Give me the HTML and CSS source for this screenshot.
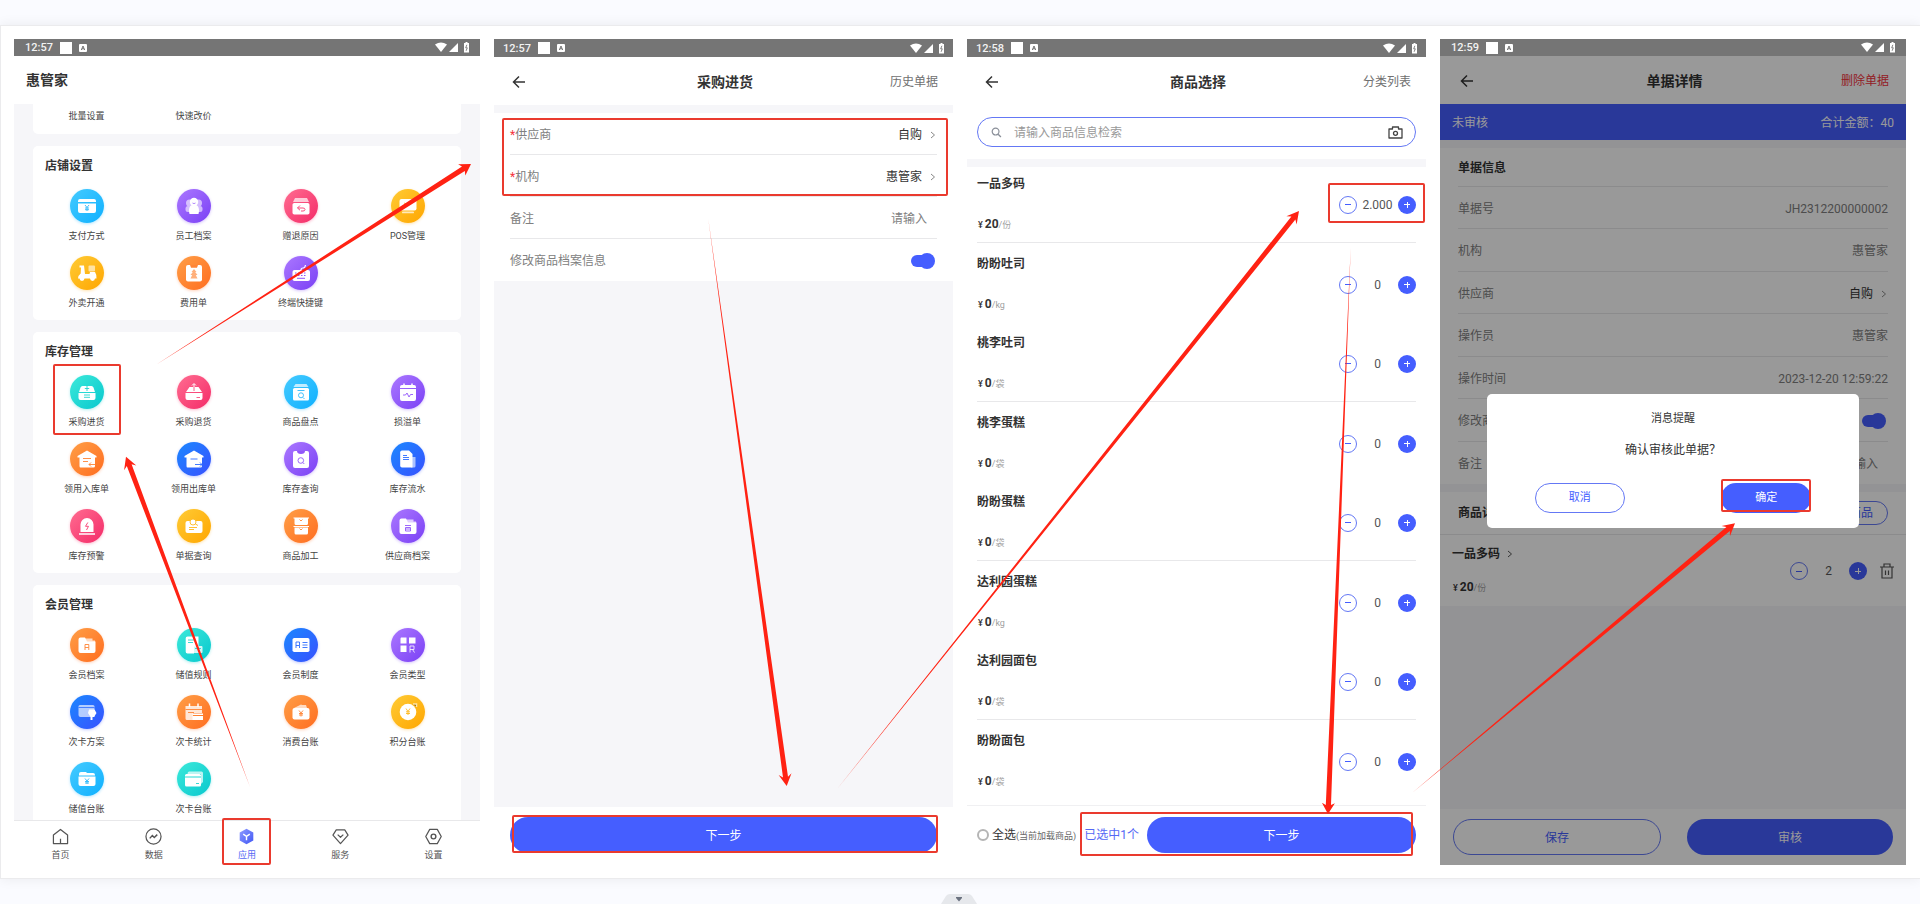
FILE: index.html
```html
<!DOCTYPE html>
<html lang="zh-CN">
<head>
<meta charset="utf-8">
<title>采购进货流程</title>
<link rel="stylesheet" href="styles.css">
</head>
<body>
<svg class="sprite" aria-hidden="true">
  <defs>
    <linearGradient id="g-tab" x1="0" y1="0" x2="1" y2="1"><stop offset="0" stop-color="#8f9bff"/><stop offset="1" stop-color="#4057f5"/></linearGradient>
    <symbol id="status-right" viewBox="0 0 36 11">
      <path fill="#fff" d="M0 2.600Q6-1.600 12 2.600L6 10z"/>
      <path fill="#fff" d="M23 1v9h-9z"/>
      <path fill="#fff" d="M30.500 0h2v1H34v9.500h-5V1h1.500z"/>
      <path fill="none" stroke="#757575" stroke-width=".9" d="M31.900 2.800l-1.200 3h1.600l-1.200 3"/>
    </symbol>
    <symbol id="status-app" viewBox="0 0 8 8"><rect width="8" height="8" rx="1" fill="#fff"/><path d="M2.300 6l1.700-4 1.700 4M3 4.800h2" fill="none" stroke="#666" stroke-width=".9"/></symbol>
    <symbol id="back" viewBox="0 0 14 14"><path d="M13 7H2M7 1.500L1.500 7 7 12.500" fill="none" stroke="currentColor" stroke-width="1.500"/></symbol>
    <symbol id="chevron" viewBox="0 0 6 8"><path d="M1 1l3.500 3L1 7" fill="none" stroke="currentColor"/></symbol>
    <symbol id="search" viewBox="0 0 12 12"><circle cx="5" cy="5" r="3.700" fill="none" stroke="currentColor" stroke-width="1.300"/><path d="M7.800 7.800l3 3" stroke="currentColor" stroke-width="1.500"/></symbol>
    <symbol id="camera" viewBox="0 0 15 13"><path d="M1 3h3.500V1h6v2H14v9H1z" fill="none" stroke="currentColor" stroke-width="1.300" stroke-linejoin="round"/><circle cx="7.500" cy="7.300" r="2" fill="none" stroke="currentColor" stroke-width="1.300"/></symbol>
    <symbol id="trash" viewBox="0 0 14 16"><path d="M0 4h14M4 4V1h6v3M2 4v11h10V4M5.500 7.500v4.500M8.500 7.500v4.500" fill="none" stroke="currentColor" stroke-width="1.200"/></symbol>

    <symbol id="pay" viewBox="0 0 34 34"><path fill="#fff" d="M10 10h14q2 0 2 2v1H8v-1q0-2 2-2zM8 14.500h18V22q0 2-2 2H10q-2 0-2-2z"/><path fill="none" stroke="currentColor" stroke-width=".9" d="M15 16l2 2.500 2-2.500M17 18.500V22M15 19h4M15 20.700h4"/></symbol>
    <symbol id="staff" viewBox="0 0 34 34"><g fill="#fff"><g opacity=".6"><circle cx="12.500" cy="14" r="3.500"/><circle cx="21.500" cy="14" r="3.500"/><rect x="8.500" y="17" width="17" height="6" rx="2.500"/></g><circle cx="17" cy="13" r="4.200"/><path d="M15 16h4c3 1 3.500 5 2.500 9h-9c-1-4-.5-8 2.500-9z"/></g><path d="M15.500 14q1.500 1.300 3 0" fill="none" stroke="currentColor" stroke-width=".7"/></symbol>
    <symbol id="reason" viewBox="0 0 34 34"><path fill="#fff" opacity=".7" d="M11 9h12l2 4H9z"/><rect x="8.500" y="14" width="17" height="11.500" rx="1.800" fill="#fff"/><path fill="none" stroke="currentColor" d="M16 16.500L13.500 19l2.500 2.200M13.500 19H19q2 0 2 1.500T19 22h-2"/></symbol>
    <symbol id="pos" viewBox="0 0 34 34"><rect x="8.500" y="10" width="17" height="11.500" rx="2" fill="#fff"/><rect x="11" y="22.500" width="12" height="1.800" rx=".9" fill="#fff" opacity=".7"/><path fill="none" stroke="currentColor" stroke-width=".8" d="M13 14l4 2 4-2"/></symbol>
    <symbol id="scooter" viewBox="0 0 34 34"><rect x="18.500" y="9.500" width="6.500" height="6" rx="1" fill="#fff" opacity=".6"/><path fill="#fff" d="M9.500 9.500H14l1 8.500h4.500l.5-2H25q1.500 2 1.500 6.500H8q0-3 2.700-5l.3-6H9.500z"/><circle cx="12" cy="22.500" r="2.400" fill="#fff"/><circle cx="22.500" cy="22.500" r="2.400" fill="#fff"/></symbol>
    <symbol id="expense" viewBox="0 0 34 34"><rect x="9" y="9" width="16" height="16.500" rx="2" fill="#fff"/><path fill="currentColor" d="M13 9h8l-1 2.800h-6z"/><path fill="currentColor" opacity=".65" d="M17 13l2.500 3h-1.300l2.300 3h-1.700l1.700 3.500h-7l1.700-3.500h-1.700l2.300-3h-1.300z"/></symbol>
    <symbol id="keyboard" viewBox="0 0 34 34"><rect x="8.500" y="14" width="17.500" height="11" rx="2" fill="#fff"/><path d="M17 14q0-2 2-2t2.500-3" fill="none" stroke="#fff" stroke-width="1.200"/><path d="M11 17h12M11 19.500h12" stroke="currentColor" stroke-dasharray="1.500 1.500"/><path d="M13 22.300h8" stroke="currentColor"/></symbol>
    <symbol id="buy" viewBox="0 0 34 34"><path fill="#fff" d="M12.500 11h9q1.500 0 2 1.500l1.500 4.500H9l1.500-4.500q.5-1.500 2-1.500zM8.500 18h17v5q0 2-2 2h-13q-2 0-2-2z"/><path stroke="currentColor" stroke-width=".9" d="M17 10v6M14.800 13.500h4.400M14 20h6M14 22.300h6"/></symbol>
    <symbol id="buyback" viewBox="0 0 34 34"><path fill="#fff" d="M12.500 12h9l3.500 5H9zM8.500 18h17v5q0 2-2 2h-13q-2 0-2-2z"/><path fill="none" stroke="#fff" d="M17 12V9M15 10.500L17 8.500l2 2"/><path fill="none" stroke="currentColor" stroke-width=".9" d="M17 12v4M19.500 22.500H23"/></symbol>
    <symbol id="count" viewBox="0 0 34 34"><path fill="#fff" opacity=".7" d="M11.500 9h11l2 3h-15z"/><rect x="9" y="13" width="16" height="12.500" rx="1.500" fill="#fff"/><path fill="none" stroke="currentColor" stroke-width=".9" d="M13.500 15.500h7M19 22.500l1.500 1.500"/><circle cx="17" cy="20.300" r="2.500" fill="none" stroke="currentColor" stroke-width=".9"/></symbol>
    <symbol id="pulse" viewBox="0 0 34 34"><path fill="#fff" d="M11 10h12q2 0 2 2v1H9v-1q0-2 2-2zM9 14h16v10q0 2-2 2H11q-2 0-2-2z"/><path stroke="#fff" stroke-width="1.500" d="M13 8.500V11M21 8.500V11"/><path fill="none" stroke="currentColor" stroke-width=".9" d="M12 20h2.500l1.500-2 2 4 1.500-2.500H22"/></symbol>
    <symbol id="house-in" viewBox="0 0 34 34"><path fill="#fff" d="M17 8.500l9.500 5.500v1.500H25V24q0 1.500-1.500 1.500h-13Q9.500 25.500 9.500 24v-8.500h-2V14z"/><path fill="none" stroke="currentColor" stroke-width=".9" d="M13 16.500h8M13 19.500h5M25 22.500h-6M21 20.500l-2 2 2 2"/></symbol>
    <symbol id="house-out" viewBox="0 0 34 34"><path fill="#fff" d="M17 8.500l9.500 5.500v1.500H25V24q0 1.500-1.500 1.500h-13Q9.500 25.500 9.500 24v-8.500h-2V14z"/><path fill="none" stroke="currentColor" stroke-width=".9" d="M13.500 17h7M18 22.500h7M23 20.500l2 2-2 2"/></symbol>
    <symbol id="query" viewBox="0 0 34 34"><rect x="9" y="9" width="16" height="17" rx="2" fill="#fff"/><path fill="currentColor" d="M13 9h8q0 3-4 3t-4-3z"/><circle cx="16.800" cy="18.500" r="2.800" fill="none" stroke="currentColor" stroke-width=".9"/><path stroke="currentColor" stroke-width=".9" d="M18.800 20.500l1.500 1.500"/></symbol>
    <symbol id="flow" viewBox="0 0 34 34"><path fill="#fff" opacity=".6" d="M21 15h3.500v9q0 1.500-1.500 1.500h-3z"/><path fill="#fff" d="M11 8.500h7l3.500 3.500v13.500H11q-1.800 0-1.800-1.800V10.300q0-1.800 1.800-1.800z"/><path stroke="currentColor" stroke-width=".9" d="M12 13.500h4M12 15.500h6M12 17.500h6"/></symbol>
    <symbol id="alert" viewBox="0 0 34 34"><path fill="#fff" d="M10.500 23v-7.500a6.500 6.500 0 0113 0V23z"/><path stroke="#fff" stroke-width="1.300" d="M9 25h16"/><path fill="none" stroke="currentColor" d="M17.800 13.500l-2.300 3.800h3l-2 3.700"/></symbol>
    <symbol id="doc-query" viewBox="0 0 34 34"><rect x="8.500" y="12" width="17" height="12" rx="2" fill="#fff"/><circle cx="16" cy="13" r="3" fill="#fff" stroke="currentColor" stroke-width=".9"/><path stroke="currentColor" stroke-width=".9" d="M18.500 15l2.500 1.500M12 18.500h8M12 20.500h5"/></symbol>
    <symbol id="boxes" viewBox="0 0 34 34"><path fill="#fff" d="M10.500 9h13.500v5.500q0 1.500-1.500 1.500H12q-1.500 0-1.500-1.500zM10.500 18.500h13.500V24q0 1.500-1.500 1.500H12q-1.500 0-1.500-1.500zM9.500 17h15.500v1H9.500zM9.500 8.500h15.500v1H9.500z"/><path fill="none" stroke="currentColor" stroke-width=".9" d="M15.500 10.500l1.500 1.500 1.500-1.500M15.500 19.500l1.500 1.500 1.500-1.500"/></symbol>
    <symbol id="supplier" viewBox="0 0 34 34"><path fill="#fff" opacity=".7" d="M15 10.500h7.500v2H25v3H15z"/><path fill="#fff" d="M10.500 9.500h4.500l2 4h8.500V23q0 2-2 2h-13q-2 0-2-2V11.500q0-2 2-2z"/><path fill="none" stroke="currentColor" stroke-width=".9" d="M14 16.500h6M14.500 18.500h5v3.500h-5zM14.500 20h5"/></symbol>
    <symbol id="member" viewBox="0 0 34 34"><path fill="#fff" opacity=".7" d="M15 10.500h7.500v2H25v3H15z"/><path fill="#fff" d="M10.500 9.500h4.500l2 4h8.500V23q0 2-2 2h-13q-2 0-2-2V11.500q0-2 2-2z"/><path fill="none" stroke="currentColor" stroke-width=".9" d="M15 22v-5.500h3.800v3H15M18.800 19.500V22"/></symbol>
    <symbol id="rule" viewBox="0 0 34 34"><path fill="#fff" d="M10.500 8.500h11v10H17v7h-6.500q-1.800 0-1.800-1.800V10.300q0-1.800 1.800-1.800z"/><rect x="15.500" y="18" width="10" height="7" rx="1" fill="#fff" opacity=".8"/><path stroke="currentColor" stroke-width=".9" d="M11 12h7M11 14.500h5M18 20.500h6"/></symbol>
    <symbol id="level" viewBox="0 0 34 34"><rect x="8.500" y="10" width="17" height="14" rx="1.800" fill="#fff"/><path fill="none" stroke="currentColor" stroke-width=".9" d="M12 20v-6h3.500v3.500H12M15.500 17.500V20M18.500 14.500h5M18.500 17h5M18.500 19.500h5"/></symbol>
    <symbol id="types" viewBox="0 0 34 34"><path fill="#fff" d="M10 9.500h5.500v6H9.500v-5zM18 9.500h6.500v6H18zM9.500 17.500h6V24h-6z"/><path fill="none" stroke="#fff" opacity=".8" d="M19 24.500v-6.500h4v3.500h-4M21.500 21.500l2 3"/></symbol>
    <symbol id="plan" viewBox="0 0 34 34"><path fill="#fff" opacity=".65" d="M10 10h13q1.500 0 1.500 1.500V22H10.500q-2 0-2-2v-8.500Q8.500 10 10 10z"/><path stroke="currentColor" stroke-width=".8" d="M8.500 12.500h16"/><path fill="#fff" d="M19 14.500h5.500l2 3.500-2.500 4h-1.500v3h-2v-3L18 18z"/></symbol>
    <symbol id="stats" viewBox="0 0 34 34"><path fill="#fff" opacity=".8" d="M8.500 11h16.500v7h-9v7h-6q-1.500 0-1.500-1.500z"/><path stroke="#fff" stroke-width="1.500" d="M12.500 8.500V12M21 8.500V12"/><path stroke="currentColor" stroke-width=".9" d="M8.500 14.500H25M11 17.500h6"/><path fill="#fff" d="M15.500 18.500h10.500v1.500H15.500zM15.500 21h10.500v4H15.500z"/></symbol>
    <symbol id="wallet" viewBox="0 0 34 34"><path fill="#fff" opacity=".7" d="M10 13l7-3.500 1 .5h4l1 3z"/><rect x="8.500" y="13" width="17" height="11.500" rx="2" fill="#fff"/><path fill="none" stroke="currentColor" stroke-width=".9" d="M15 15.500l2 2.500 2-2.500M17 18v3.500M15 18.500h4M15 20h4"/></symbol>
    <symbol id="points" viewBox="0 0 34 34"><circle cx="17" cy="17" r="8.300" fill="#fff"/><path stroke="#fff" stroke-width="1.500" opacity=".6" d="M22 9h3.500v3"/><path fill="none" stroke="currentColor" stroke-width=".9" d="M15 13.500l2 3 2-3M17 16.500V20M15 16.800h4M15 18.500h4"/></symbol>
    <symbol id="ledger" viewBox="0 0 34 34"><path fill="#fff" d="M11 10h5l1 1h6q2 0 2 2v.5H9V12q0-2 2-2z"/><path fill="#fff" d="M8.500 14.500h17V22q0 2-2 2h-13q-2 0-2-2z"/><path fill="none" stroke="currentColor" stroke-width=".9" d="M15 16.500l2 2.500 2-2.500M17 19v3M15 19.500h4M15 21h4"/></symbol>
    <symbol id="cards" viewBox="0 0 34 34"><path fill="#fff" opacity=".7" d="M12 9.500h12.500q1.500 0 1.500 1.500v9l-2 2V12H10.500q0-2.500 1.500-2.500z"/><path fill="#fff" d="M9.500 12h13q1.500 0 1.500 1.500v1H8v-1Q8 12 9.500 12zM8 15.500h16V23q0 1.500-1.500 1.500h-13Q8 24.500 8 23z"/><path stroke="currentColor" stroke-width=".9" d="M19 21.500h3"/></symbol>

    <symbol id="tab-home" viewBox="0 0 18 18"><path fill="none" stroke="currentColor" stroke-width="1.300" stroke-linejoin="round" d="M9 1.500L16.500 7.500v9h-15v-9zM9 11.500v5"/></symbol>
    <symbol id="tab-data" viewBox="0 0 18 18"><circle cx="9" cy="9" r="8" fill="none" stroke="currentColor" stroke-width="1.300"/><path fill="none" stroke="currentColor" stroke-width="1.500" d="M5 11l2.800-3 2 2L13 7"/></symbol>
    <symbol id="tab-apps" viewBox="0 0 18 18"><path fill="url(#g-tab)" d="M9 .8l7.200 4v8.400L9 17.200l-7.200-4V4.800z"/><path fill="none" stroke="#fff" stroke-width="1.500" d="M5.500 6.500L9 8.800l3.500-2.300M9 8.800V13"/></symbol>
    <symbol id="tab-service" viewBox="0 0 18 18"><path fill="none" stroke="currentColor" stroke-width="1.300" stroke-linejoin="round" d="M4.500 2h9L17 7.500 9 16.500 1 7.500zM6 7l3 2.800L12 7"/></symbol>
    <symbol id="tab-settings" viewBox="0 0 18 18"><path fill="none" stroke="currentColor" stroke-width="1.300" stroke-linejoin="round" d="M5 1.500h8L17.200 9 13 16.500H5L.8 9z"/><circle cx="9" cy="9" r="2.500" fill="none" stroke="currentColor" stroke-width="1.500"/></symbol>
  </defs>
</svg>

<main class="sheet">
  <section class="phone">
    <div class="status"><span>12:57</span><i class="status-block"></i><svg class="status-app"><use href="#status-app"/></svg><svg class="status-icons"><use href="#status-right"/></svg></div>
    <header class="brand"><h1>惠管家</h1></header>
    <div class="apps">
      <div class="card card-cut">
        <div class="grid">
          <a class="app" href="#">批量设置</a><a class="app" href="#">快速改价</a>
        </div>
      </div>
      <div class="card">
        <h2>店铺设置</h2>
        <div class="grid">
          <a class="app" href="#"><svg class="app-icon cyan"><use href="#pay"/></svg>支付方式</a>
          <a class="app" href="#"><svg class="app-icon purple"><use href="#staff"/></svg>员工档案</a>
          <a class="app" href="#"><svg class="app-icon pink"><use href="#reason"/></svg>赠退原因</a>
          <a class="app" href="#"><svg class="app-icon amber"><use href="#pos"/></svg>POS管理</a>
          <a class="app" href="#"><svg class="app-icon amber"><use href="#scooter"/></svg>外卖开通</a>
          <a class="app" href="#"><svg class="app-icon orange"><use href="#expense"/></svg>费用单</a>
          <a class="app" href="#"><svg class="app-icon purple"><use href="#keyboard"/></svg>终端快捷键</a>
        </div>
      </div>
      <div class="card">
        <h2>库存管理</h2>
        <div class="grid">
          <a class="app" href="#"><svg class="app-icon teal"><use href="#buy"/></svg>采购进货</a>
          <a class="app" href="#"><svg class="app-icon pink"><use href="#buyback"/></svg>采购退货</a>
          <a class="app" href="#"><svg class="app-icon cyan"><use href="#count"/></svg>商品盘点</a>
          <a class="app" href="#"><svg class="app-icon purple"><use href="#pulse"/></svg>损溢单</a>
          <a class="app" href="#"><svg class="app-icon orange"><use href="#house-in"/></svg>领用入库单</a>
          <a class="app" href="#"><svg class="app-icon blue"><use href="#house-out"/></svg>领用出库单</a>
          <a class="app" href="#"><svg class="app-icon purple"><use href="#query"/></svg>库存查询</a>
          <a class="app" href="#"><svg class="app-icon blue"><use href="#flow"/></svg>库存流水</a>
          <a class="app" href="#"><svg class="app-icon pink"><use href="#alert"/></svg>库存预警</a>
          <a class="app" href="#"><svg class="app-icon amber"><use href="#doc-query"/></svg>单据查询</a>
          <a class="app" href="#"><svg class="app-icon orange"><use href="#boxes"/></svg>商品加工</a>
          <a class="app" href="#"><svg class="app-icon purple"><use href="#supplier"/></svg>供应商档案</a>
        </div>
      </div>
      <div class="card">
        <h2>会员管理</h2>
        <div class="grid">
          <a class="app" href="#"><svg class="app-icon orange"><use href="#member"/></svg>会员档案</a>
          <a class="app" href="#"><svg class="app-icon teal"><use href="#rule"/></svg>储值规则</a>
          <a class="app" href="#"><svg class="app-icon blue"><use href="#level"/></svg>会员制度</a>
          <a class="app" href="#"><svg class="app-icon purple"><use href="#types"/></svg>会员类型</a>
          <a class="app" href="#"><svg class="app-icon blue"><use href="#plan"/></svg>次卡方案</a>
          <a class="app" href="#"><svg class="app-icon orange"><use href="#stats"/></svg>次卡统计</a>
          <a class="app" href="#"><svg class="app-icon orange"><use href="#wallet"/></svg>消费台账</a>
          <a class="app" href="#"><svg class="app-icon amber"><use href="#points"/></svg>积分台账</a>
          <a class="app" href="#"><svg class="app-icon cyan"><use href="#ledger"/></svg>储值台账</a>
          <a class="app" href="#"><svg class="app-icon teal"><use href="#cards"/></svg>次卡台账</a>
        </div>
      </div>
    </div>
    <nav class="tabs">
      <a href="#"><svg><use href="#tab-home"/></svg>首页</a>
      <a href="#"><svg><use href="#tab-data"/></svg>数据</a>
      <a href="#" class="active"><svg><use href="#tab-apps"/></svg>应用</a>
      <a href="#"><svg><use href="#tab-service"/></svg>服务</a>
      <a href="#"><svg><use href="#tab-settings"/></svg>设置</a>
    </nav>
  </section>

  <section class="phone">
    <div class="status status-tall"><span>12:57</span><i class="status-block"></i><svg class="status-app"><use href="#status-app"/></svg><svg class="status-icons"><use href="#status-right"/></svg></div>
    <header class="bar"><button class="icon-btn" aria-label="返回"><svg class="back"><use href="#back"/></svg></button><h1>采购进货</h1><a href="#">历史单据</a></header>
    <div class="band"></div>
    <div class="fields">
      <div class="field"><span><b class="must">*</b>供应商</span><button class="pick">自购<svg class="chevron"><use href="#chevron"/></svg></button></div>
      <div class="field"><span><b class="must">*</b>机构</span><button class="pick">惠管家<svg class="chevron"><use href="#chevron"/></svg></button></div>
      <div class="field"><label for="note-a">备注</label><input id="note-a" class="note" type="text" placeholder="请输入"></div>
      <div class="field"><label for="edit-a">修改商品档案信息</label><input id="edit-a" class="toggle" type="checkbox" checked></div>
    </div>
    <div class="blank"></div>
    <footer class="foot foot-wide"><button class="btn solid">下一步</button></footer>
  </section>

  <section class="phone">
    <div class="status status-tall"><span>12:58</span><i class="status-block"></i><svg class="status-app"><use href="#status-app"/></svg><svg class="status-icons"><use href="#status-right"/></svg></div>
    <header class="bar"><button class="icon-btn" aria-label="返回"><svg class="back"><use href="#back"/></svg></button><h1>商品选择</h1><a href="#">分类列表</a></header>
    <div class="search"><svg class="search-icon"><use href="#search"/></svg><input type="text" aria-label="商品检索" placeholder="请输入商品信息检索"><button class="icon-btn" aria-label="扫码"><svg class="camera"><use href="#camera"/></svg></button></div>
    <div class="band"></div>
    <div class="goods">
      <article class="good"><div><h3>一品多码</h3><p class="price">¥<b>20</b><small>/份</small></p></div><div class="stepper"><button class="minus" aria-label="减少"></button><input aria-label="数量" value="2.000"><button class="plus" aria-label="增加"></button></div></article>
      <article class="good"><div><h3>盼盼吐司</h3><p class="price">¥<b>0</b><small>/kg</small></p></div><div class="stepper"><button class="minus" aria-label="减少"></button><input aria-label="数量" value="0"><button class="plus" aria-label="增加"></button></div></article>
      <article class="good"><div><h3>桃李吐司</h3><p class="price">¥<b>0</b><small>/袋</small></p></div><div class="stepper"><button class="minus" aria-label="减少"></button><input aria-label="数量" value="0"><button class="plus" aria-label="增加"></button></div></article>
      <article class="good"><div><h3>桃李蛋糕</h3><p class="price">¥<b>0</b><small>/袋</small></p></div><div class="stepper"><button class="minus" aria-label="减少"></button><input aria-label="数量" value="0"><button class="plus" aria-label="增加"></button></div></article>
      <article class="good"><div><h3>盼盼蛋糕</h3><p class="price">¥<b>0</b><small>/袋</small></p></div><div class="stepper"><button class="minus" aria-label="减少"></button><input aria-label="数量" value="0"><button class="plus" aria-label="增加"></button></div></article>
      <article class="good"><div><h3>达利园蛋糕</h3><p class="price">¥<b>0</b><small>/kg</small></p></div><div class="stepper"><button class="minus" aria-label="减少"></button><input aria-label="数量" value="0"><button class="plus" aria-label="增加"></button></div></article>
      <article class="good"><div><h3>达利园面包</h3><p class="price">¥<b>0</b><small>/袋</small></p></div><div class="stepper"><button class="minus" aria-label="减少"></button><input aria-label="数量" value="0"><button class="plus" aria-label="增加"></button></div></article>
      <article class="good"><div><h3>盼盼面包</h3><p class="price">¥<b>0</b><small>/袋</small></p></div><div class="stepper"><button class="minus" aria-label="减少"></button><input aria-label="数量" value="0"><button class="plus" aria-label="增加"></button></div></article>
    </div>
    <footer class="foot foot-select">
      <input id="all" class="radio" type="radio"><label for="all">全选<small>(当前加载商品)</small></label>
      <span class="picked">已选中1个</span>
      <button class="btn solid">下一步</button>
    </footer>
  </section>

  <section class="phone">
    <div class="status"><span>12:59</span><i class="status-block"></i><svg class="status-app"><use href="#status-app"/></svg><svg class="status-icons"><use href="#status-right"/></svg></div>
    <div class="screen">
      <header class="bar bar-detail"><button class="icon-btn" aria-label="返回"><svg class="back"><use href="#back"/></svg></button><h1>单据详情</h1><a href="#" class="danger">删除单据</a></header>
      <div class="summary"><span>未审核</span><span>合计金额：40</span></div>
      <div class="band"></div>
      <div class="fields fields-detail">
        <h2>单据信息</h2>
        <div class="field"><span>单据号</span><span>JH2312200000002</span></div>
        <div class="field"><span>机构</span><span>惠管家</span></div>
        <div class="field"><span>供应商</span><button class="pick">自购<svg class="chevron"><use href="#chevron"/></svg></button></div>
        <div class="field"><span>操作员</span><span>惠管家</span></div>
        <div class="field"><span>操作时间</span><span>2023-12-20 12:59:22</span></div>
        <div class="field"><label for="edit-b">修改商品档案信息</label><input id="edit-b" class="toggle" type="checkbox" checked></div>
        <div class="field"><label for="note-b">备注</label><input id="note-b" class="note" type="text" placeholder="请输入"></div>
      </div>
      <div class="band"></div>
      <div class="fields goods-head"><h2>商品详情</h2><button class="btn line small">添加商品</button></div>
      <article class="detail-good">
        <div><h3>一品多码<svg class="chevron"><use href="#chevron"/></svg></h3><p class="price">¥<b>20</b><small>/份</small></p></div>
        <div class="stepper"><button class="minus" aria-label="减少"></button><input aria-label="数量" value="2"><button class="plus" aria-label="增加"></button></div>
        <button class="icon-btn" aria-label="删除"><svg class="trash"><use href="#trash"/></svg></button>
      </article>
      <div class="blank"></div>
      <footer class="foot foot-pair"><button class="btn line">保存</button><button class="btn solid">审核</button></footer>
      <div class="mask">
        <div class="dialog" role="dialog" aria-labelledby="dlg-title">
          <h2 id="dlg-title">消息提醒</h2>
          <p>确认审核此单据？</p>
          <div class="dialog-actions"><button class="btn line">取消</button><button class="btn solid">确定</button></div>
        </div>
      </div>
    </div>
  </section>
</main>
<button class="handle" aria-label="展开"><svg viewBox="0 0 36 10"><path fill="#e6e8ec" d="M0 10L5 2Q6.500 0 9 0H27Q29.500 0 31 2L36 10z"/><path fill="#6b7280" d="M15 3h6v1l-3 3.500L15 4z"/></svg></button>

<svg class="marks" viewBox="0 0 1920 904" preserveAspectRatio="none" aria-hidden="true">
  <g fill="none" stroke="#ea3a2e" stroke-width="2">
    <rect x="54" y="365" width="66" height="69" rx="1"/>
    <rect x="223" y="819" width="47" height="45" rx="1"/>
    <rect x="503" y="119" width="444" height="76" rx="1"/>
    <rect x="513" y="816" width="424" height="36" rx="1"/>
    <rect x="1329" y="184" width="95" height="38" rx="1"/>
    <rect x="1081" y="813" width="331" height="42" rx="1"/>
    <rect x="1722" y="480" width="88" height="31" rx="1"/>
  </g>
  <g fill="#ff2213">
    <path d="M156 364.700L462 166.600 458.100 164.300 471 164 465.300 175.600 464.800 171z"/>
    <path d="M250 787L126.800 466 124.100 470.200 126 456.700 136.300 465.600 131.600 464.200z"/>
    <path d="M708.300 219L783 777.400 778.600 775 786.700 786 791.500 773.200 788 776.800z"/>
    <path d="M837.700 788.300L1291.400 216.400 1286.400 216.300 1299 211 1296.600 224.500 1295.400 219.600z"/>
    <path d="M1350.700 247.700L1325.800 804.900 1321.900 802.700 1328 814 1334.900 803.300 1331 805.100z"/>
    <path d="M1411.700 793.300L1726.400 527.100 1721.600 526 1735 523.300 1730 536 1729.800 531.100z"/>
  </g>
</svg>
</body>
</html>
```

FILE: styles.css
```css
:root {
  --blue: #455eff;
  --outline: #6478f5;
  --grey-bg: #f6f6f9;
  --line: #e8e8ea;
  --text: #333;
  --muted: #808080;
}

* { box-sizing: border-box; }

body {
  margin: 0;
  height: 100vh;
  display: flex;
  flex-direction: column;
  position: relative;
  overflow: hidden;
  background: #fafbff;
  color: var(--text);
  font: 12px/20px Roboto, "Noto Sans CJK SC", sans-serif;
}

h1, h2, h3, p { margin: 0; font-size: 12px; font-weight: 700; }
a { color: inherit; text-decoration: none; }
button, input { font: inherit; color: inherit; border: 0; padding: 0; margin: 0; background: none; }
svg { display: block; }
.sprite { position: absolute; width: 0; height: 0; }

.sheet {
  flex: 1;
  min-height: 0;
  margin: 25px 0;
  padding: 13px 14px 13px 13px;
  display: grid;
  grid-template-columns: 466fr 459fr 459fr 466fr;
  grid-template-rows: minmax(0, 1fr);
  gap: 14px;
  background: #fff;
  border: 1px solid #ebebed;
  border-right: 0;
  box-shadow: 0 0 12px rgba(0, 0, 0, .07);
}

.phone { display: flex; flex-direction: column; min-width: 0; min-height: 0; }

/* status bar */
.status {
  flex: none;
  height: 17px;
  padding: 0 9px 0 11px;
  display: flex;
  align-items: center;
  background: #757575;
  color: #f2f2f2;
  font-size: 11px;
  font-weight: 500;
  line-height: 17px;
}
.status-tall { height: 18px; padding: 0 7px 0 9px; }
.status-block { width: 12px; height: 12px; margin: 0 7px; background: #fff; }
.status-app { width: 8px; height: 8px; }
.status-icons { width: 36px; height: 11px; margin-left: auto; }

/* headers */
.brand { flex: none; height: 48px; padding: 14px 12px; }
.brand h1, .bar h1 { font-size: 14px; }
.bar {
  flex: none;
  height: 48px;
  padding: 1px 15px 0 18px;
  display: grid;
  grid-template-columns: 1fr auto 1fr;
  align-items: center;
}
.bar-detail { padding: 1px 17px 0 20px; }
.bar a { justify-self: end; color: #707070; }
.bar a.danger { color: #f5323c; }
.icon-btn { display: block; width: max-content; cursor: pointer; }
.back { width: 14px; height: 14px; }
.band { flex: none; height: 8px; background: var(--grey-bg); }
.blank { flex: 1; background: var(--grey-bg); }

/* app launcher */
.apps {
  flex: 1;
  min-height: 0;
  overflow: hidden;
  padding: 0 19px;
  display: flex;
  flex-direction: column;
  gap: 12px;
  background: var(--grey-bg);
}
.card { flex: none; background: #fff; border-radius: 5px; }
.card h2 { padding: 10px 12px; }
.card-cut { border-radius: 0 0 5px 5px; }
.grid { display: grid; grid-template-columns: repeat(4, 1fr); }
.app {
  height: 67px;
  padding-top: 3px;
  display: flex;
  flex-direction: column;
  align-items: center;
  gap: 6px;
  color: #444;
  font-size: 9px;
  line-height: 14px;
}
.card-cut .app { height: 30px; padding-top: 5px; }
.app-icon { width: 34px; height: 34px; border-radius: 50%; }
.cyan { color: #2fb9fb; background: linear-gradient(135deg, #45cbff, #0fb0ff); box-shadow: 0 1px 3px #0fb0ff50; }
.purple { color: #9257fa; background: linear-gradient(135deg, #ab78ff, #7a40f5); box-shadow: 0 1px 3px #7a40f550; }
.pink { color: #f94d7d; background: linear-gradient(135deg, #ff6d91, #f42b68); box-shadow: 0 1px 3px #f42b6850; }
.amber { color: #ffb91d; background: linear-gradient(135deg, #ffcb35, #ffa600); box-shadow: 0 1px 3px #ffa60050; }
.orange { color: #ff8536; background: linear-gradient(135deg, #ff9f47, #ff6d20); box-shadow: 0 1px 3px #ff6d2050; }
.teal { color: #22d5cf; background: linear-gradient(135deg, #3ce9da, #08c8ce); box-shadow: 0 1px 3px #08c8ce50; }
.blue { color: #2c6cff; background: linear-gradient(135deg, #1b88ff, #3851ff); box-shadow: 0 1px 3px #3851ff50; }

.tabs {
  flex: none;
  display: grid;
  grid-template-columns: repeat(5, 1fr);
  border-top: 1px solid var(--line);
}
.tabs a {
  height: 44px;
  padding-top: 7px;
  display: flex;
  flex-direction: column;
  align-items: center;
  gap: 3px;
  color: #555;
  font-size: 9px;
  line-height: 14px;
}
.tabs svg { width: 17px; height: 17px; }
.tabs .active { color: #5568f5; }

/* form rows */
.fields { flex: none; padding: 0 16px; }
.fields-detail, .goods-head { padding: 0 18px; }
.fields-detail h2 { padding: 10px 0 8px; border-bottom: 1px solid var(--line); }
.field {
  height: 42px;
  padding-top: 2px;
  display: flex;
  align-items: center;
  justify-content: space-between;
  color: var(--muted);
  border-bottom: 1px solid var(--line);
}
.fields-detail .field:nth-child(2n + 1) { height: 43px; }
.field:last-child { border-bottom: 0; }
.must { color: #f5323c; font-weight: 400; }
.pick { display: flex; align-items: center; gap: 8px; padding-right: 1px; color: var(--text); cursor: pointer; }
.chevron { width: 6px; height: 8px; color: #888; }
.note { width: 120px; padding-right: 10px; text-align: right; }
.note::placeholder { color: var(--muted); }
.toggle {
  appearance: none;
  width: 24px;
  height: 16px;
  margin-right: 2px;
  display: flex;
  align-items: center;
}
.toggle::before { content: ""; flex: 1; height: 12px; margin-right: -8px; border-radius: 6px 0 0 6px; background: var(--blue); }
.toggle::after { content: ""; width: 16px; height: 16px; border-radius: 50%; background: var(--blue); }

/* buttons */
.btn {
  height: 36px;
  padding-top: 1px;
  border-radius: 18px;
  text-align: center;
  cursor: pointer;
}
.solid { background: var(--blue); color: #fff; }
.line { border: 1px solid var(--outline); color: var(--blue); }
.small { height: 24px; padding: 0 14px; }
.foot { flex: none; padding: 10px 16px 12px; display: flex; align-items: center; background: #fff; }
.foot .btn { flex: 1; }
.foot-select { padding: 11px 10px 12px; border-top: 1px solid #f0f0f2; white-space: nowrap; }
.foot-pair { padding: 10px 13px; gap: 26px; }
.radio { appearance: none; width: 12px; height: 12px; margin-right: 3px; border: 2px solid #b5b5b5; border-radius: 50%; }
.foot-select small { color: #666; font-size: 9px; }
.picked { margin: 0 8px; color: #5568f5; }

/* product list */
.search {
  flex: none;
  height: 30px;
  margin: 12px 10px;
  padding: 1px 12px 0 13px;
  display: flex;
  align-items: center;
  border: 1px solid var(--outline);
  border-radius: 15px;
}
.search input { flex: 1; min-width: 0; margin: 0 12px; }
.search input::placeholder { color: #999; }
.search-icon { width: 11px; height: 11px; color: #8a8f99; }
.camera { width: 15px; height: 13px; color: #444; }
.goods {
  flex: 1;
  min-height: 0;
  padding: 0 10px 6px;
  display: grid;
  grid-template-rows: 75fr repeat(7, 79fr);
}
.good { display: flex; align-items: center; justify-content: space-between; padding: 11px 0 7px; }
.good:first-child { padding-top: 7px; }
.good:nth-child(odd) { border-bottom: 1px solid var(--line); }
.good h3 { margin-bottom: 20px; }
.price { padding-left: 1px; font-size: 9px; font-weight: 500; }
.price b { padding-left: 2px; font-size: 12px; }
.price small { color: #a0a0a0; font-size: 9px; font-weight: 400; }
.stepper { display: flex; align-items: center; }
.stepper input { width: 41px; text-align: center; color: #555; }
.minus, .plus {
  width: 18px;
  height: 18px;
  display: grid;
  place-items: center;
  border-radius: 50%;
  cursor: pointer;
}
.minus { border: 1px solid var(--outline); }
.minus::before { content: ""; width: 6px; height: 1px; background: var(--blue); }
.plus { background: var(--blue); }
.plus::before {
  content: "";
  width: 6px;
  height: 6px;
  background: linear-gradient(#fff, #fff) center / 6px 1px no-repeat, linear-gradient(#fff, #fff) center / 1px 6px no-repeat;
}

/* order detail */
.screen { flex: 1; min-height: 0; position: relative; display: flex; flex-direction: column; background: #fff; }
.summary {
  flex: none;
  height: 36px;
  padding: 2px 12px 0;
  display: flex;
  align-items: center;
  justify-content: space-between;
  background: var(--blue);
  color: #fff;
}
.goods-head { height: 43px; display: flex; align-items: center; justify-content: space-between; border-bottom: 1px solid var(--line); background-clip: content-box; }
.detail-good {
  flex: none;
  margin: 0 12px;
  padding: 9px 0 8px;
  display: flex;
  align-items: center;
}
.detail-good h3 { margin-bottom: 13px; display: flex; align-items: center; gap: 7px; }
.detail-good .chevron { color: #555; }
.detail-good .stepper { margin: 0 13px 0 auto; }
.trash { width: 14px; height: 16px; color: #555; }

.mask {
  position: absolute;
  inset: 0;
  display: grid;
  place-items: center;
  background: rgba(0, 0, 0, .4);
}
.dialog {
  width: 80%;
  padding: 15px 0;
  background: #fff;
  border-radius: 5px;
  text-align: center;
}
.dialog h2 { font-size: 11px; font-weight: 400; }
.dialog p { margin: 11px 0 23px; font-weight: 400; }
.dialog-actions { display: flex; justify-content: space-around; }
.dialog .btn { width: 90px; height: 30px; font-size: 11px; }

.handle { position: absolute; bottom: 0; left: 49%; width: 36px; height: 10px; cursor: pointer; }
.marks { position: absolute; inset: 0; width: 100%; height: 100%; pointer-events: none; }
```
